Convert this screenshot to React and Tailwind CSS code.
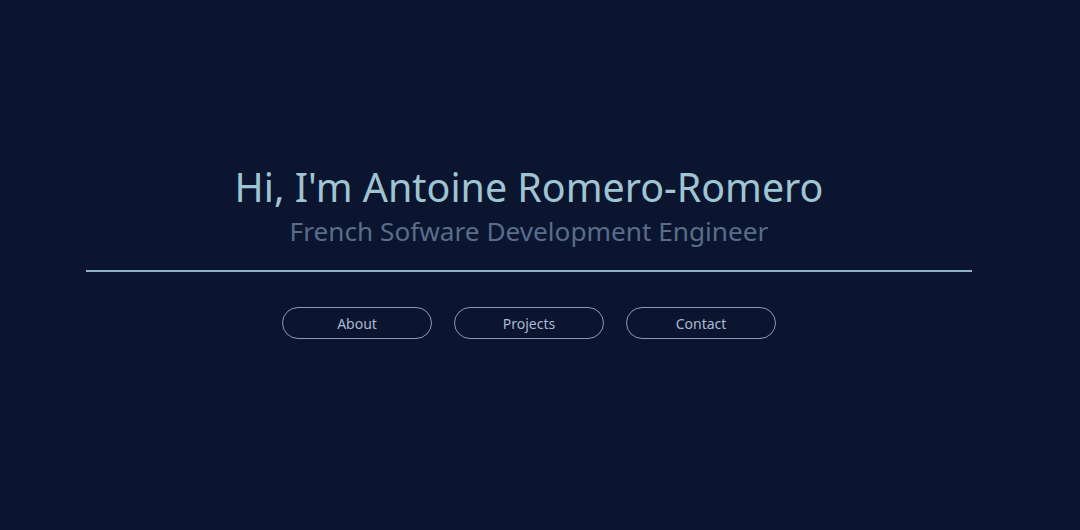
export default function App() {
  return (
    <div className="w-[1080px] h-[530px] bg-[#0b1530] flex flex-col" style={{ fontFamily: '"Noto Sans", sans-serif' }}>
      <div className="w-[1058px] flex flex-col items-center pt-[164px]">
        <h1 className="text-[39.4px] leading-[46px] text-[#a0c5d2]">Hi, I'm Antoine Romero-Romero</h1>
        <p className="text-[26.2px] leading-[34px] text-[#596d8a] mt-[4px]">French Sofware Development Engineer</p>
        <div className="w-[886px] h-[2px] bg-[#8fb2c8] mt-[22px]"></div>
        <div className="flex gap-[22px] mt-[35px]">
          {["About", "Projects", "Contact"].map((t) => (
            <button key={t} className="w-[150px] h-[32px] rounded-full border border-[#8a9bb5] text-[14px] text-[#a9b9cf] flex items-center justify-center">
              {t}
            </button>
          ))}
        </div>
      </div>
    </div>
  );
}
